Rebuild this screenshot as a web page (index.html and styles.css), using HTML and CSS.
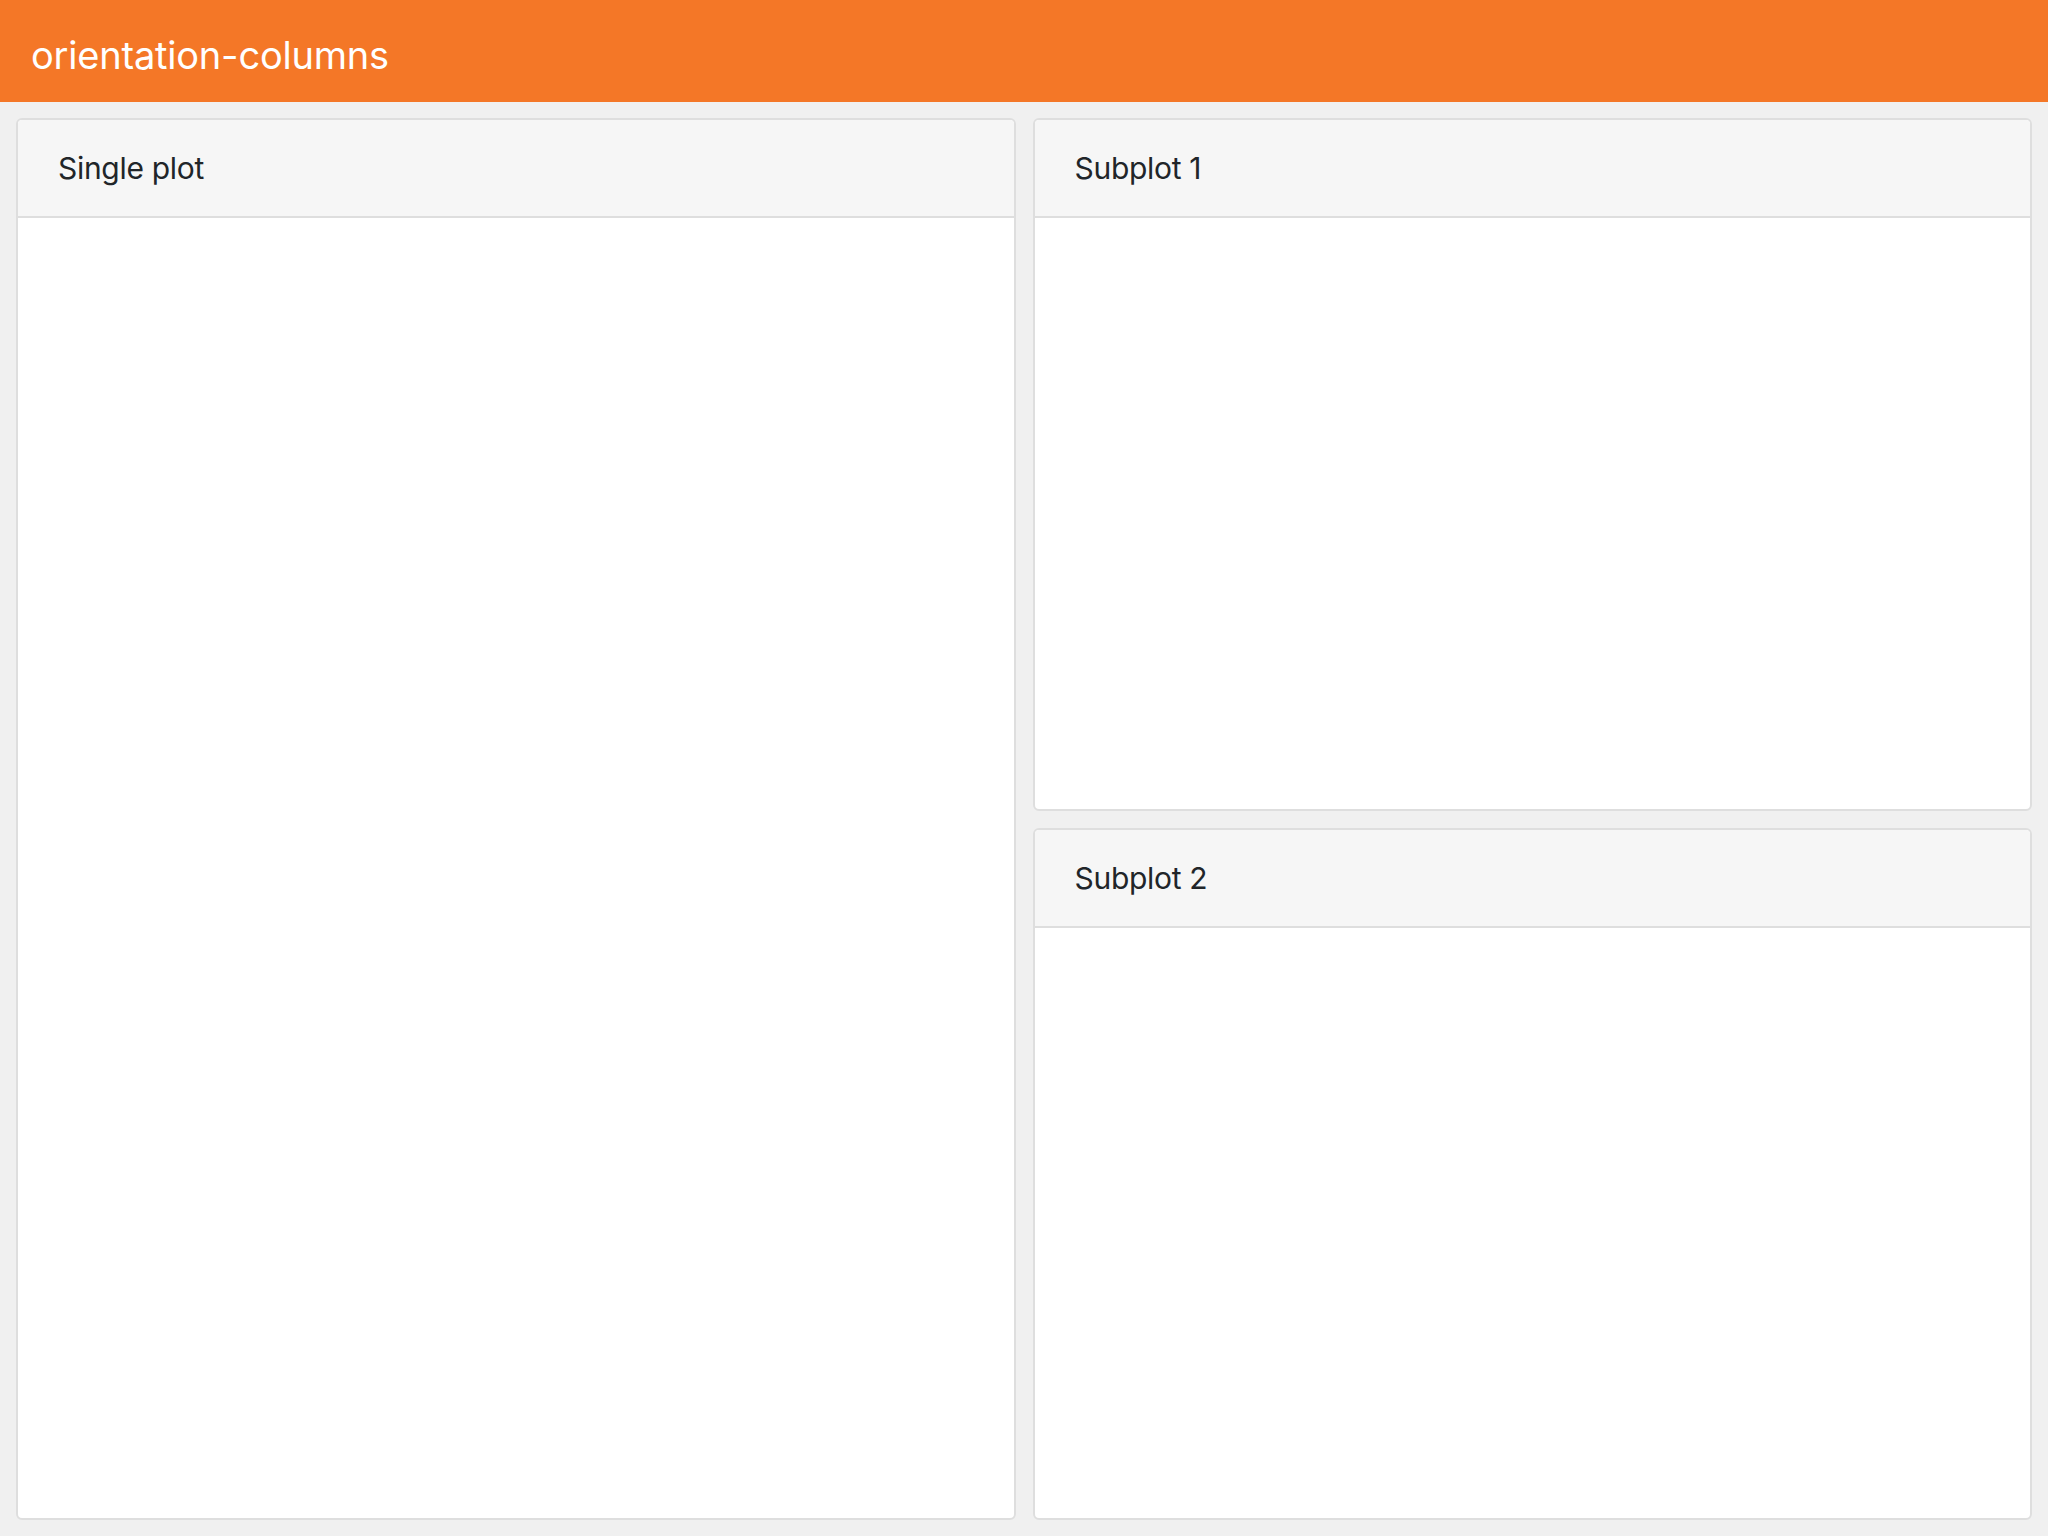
FILE: index.html
```html
<!DOCTYPE html>
<html>
<head>
<meta charset="utf-8">
<link rel="stylesheet" href="styles.css">
</head>
<body>
<header class="navbar"><span class="brand">orientation-columns</span></header>
<main class="dashboard">
  <section class="column">
    <div class="card">
      <div class="card-header">Single plot</div>
      <div class="card-body"></div>
    </div>
  </section>
  <section class="column">
    <div class="card">
      <div class="card-header">Subplot 1</div>
      <div class="card-body"></div>
    </div>
    <div class="card">
      <div class="card-header">Subplot 2</div>
      <div class="card-body"></div>
    </div>
  </section>
</main>
</body>
</html>
```
FILE: styles.css
```css
html, body {
  margin: 0;
  padding: 0;
}
body {
  background: #f0f0f0;
  font-family: Inter, "Liberation Sans", sans-serif;
  display: flex;
  flex-direction: column;
  height: 1536px;
  overflow: hidden;
}
.navbar {
  height: 102px;
  flex: none;
  background: #f47727;
  display: flex;
  align-items: center;
  padding: 8px 0 0 31px;
  box-sizing: border-box;
}
.brand {
  color: #ffffff;
  font-size: 38px;
  letter-spacing: -0.2px;
}
.dashboard {
  flex: 1;
  display: grid;
  grid-template-columns: 1fr 1fr;
  gap: 17px;
  padding: 16px 16px 16px 16px;
  min-height: 0;
}
.column {
  display: flex;
  flex-direction: column;
  gap: 17px;
  min-height: 0;
}
.card {
  flex: 1;
  display: flex;
  flex-direction: column;
  background: #ffffff;
  border: 2px solid #dedede;
  border-radius: 6px;
  overflow: hidden;
}
.card-header {
  flex: none;
  height: 98px;
  box-sizing: border-box;
  background: #f6f6f6;
  border-bottom: 2px solid #dedede;
  display: flex;
  align-items: center;
  padding-left: 40px;
  color: #212529;
  font-size: 30px;
  letter-spacing: -0.3px;
}
.card-body {
  flex: 1;
}
```
